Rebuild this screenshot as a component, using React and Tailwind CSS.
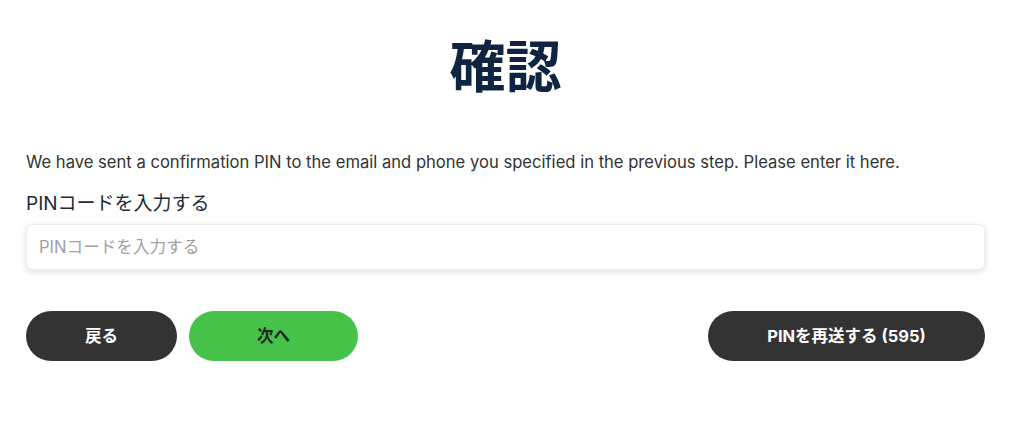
import React from 'react';

const sans = '"Inter", "Noto Sans CJK JP", sans-serif';

export default function App() {
  return (
    <div className="min-h-[429px] bg-white" style={{ fontFamily: sans }}>
      <div className="w-[959px] ml-[26px] flex flex-col">
        <h1 className="mt-[34px] text-center text-[56px] leading-[66px] font-bold text-[#0e2440]">確認</h1>
        <p className="mt-[51px] text-[16.6px] leading-[22px] text-[#333333]">
          We have sent a confirmation PIN to the email and phone you specified in the previous step. Please enter it here.
        </p>
        <label className="mt-[19px] text-[19px] leading-[23px] text-[#1e2a38]">PINコードを入力する</label>
        <input
          type="text"
          autoFocus
          placeholder="PINコードを入力する"
          className="mt-[9px] h-[46px] w-full rounded-md border border-[#ececec] bg-white px-[12px] text-[16.6px] text-[#333] caret-[#222] placeholder:text-[#a0a0a0] shadow-[0_2px_6px_rgba(0,0,0,0.12)] outline-none"
        />
        <div className="mt-[41px] flex items-center">
          <button className="h-[50px] w-[151px] rounded-full bg-[#333333] text-[16.5px] font-bold text-white">戻る</button>
          <button className="ml-[12px] h-[50px] w-[169px] rounded-full bg-[#46c24a] text-[16.5px] font-bold text-[#1e2a20]">次へ</button>
          <button className="ml-auto h-[50px] w-[277px] rounded-full bg-[#333333] text-[16.5px] font-bold text-white">PINを再送する (595)</button>
        </div>
      </div>
    </div>
  );
}
